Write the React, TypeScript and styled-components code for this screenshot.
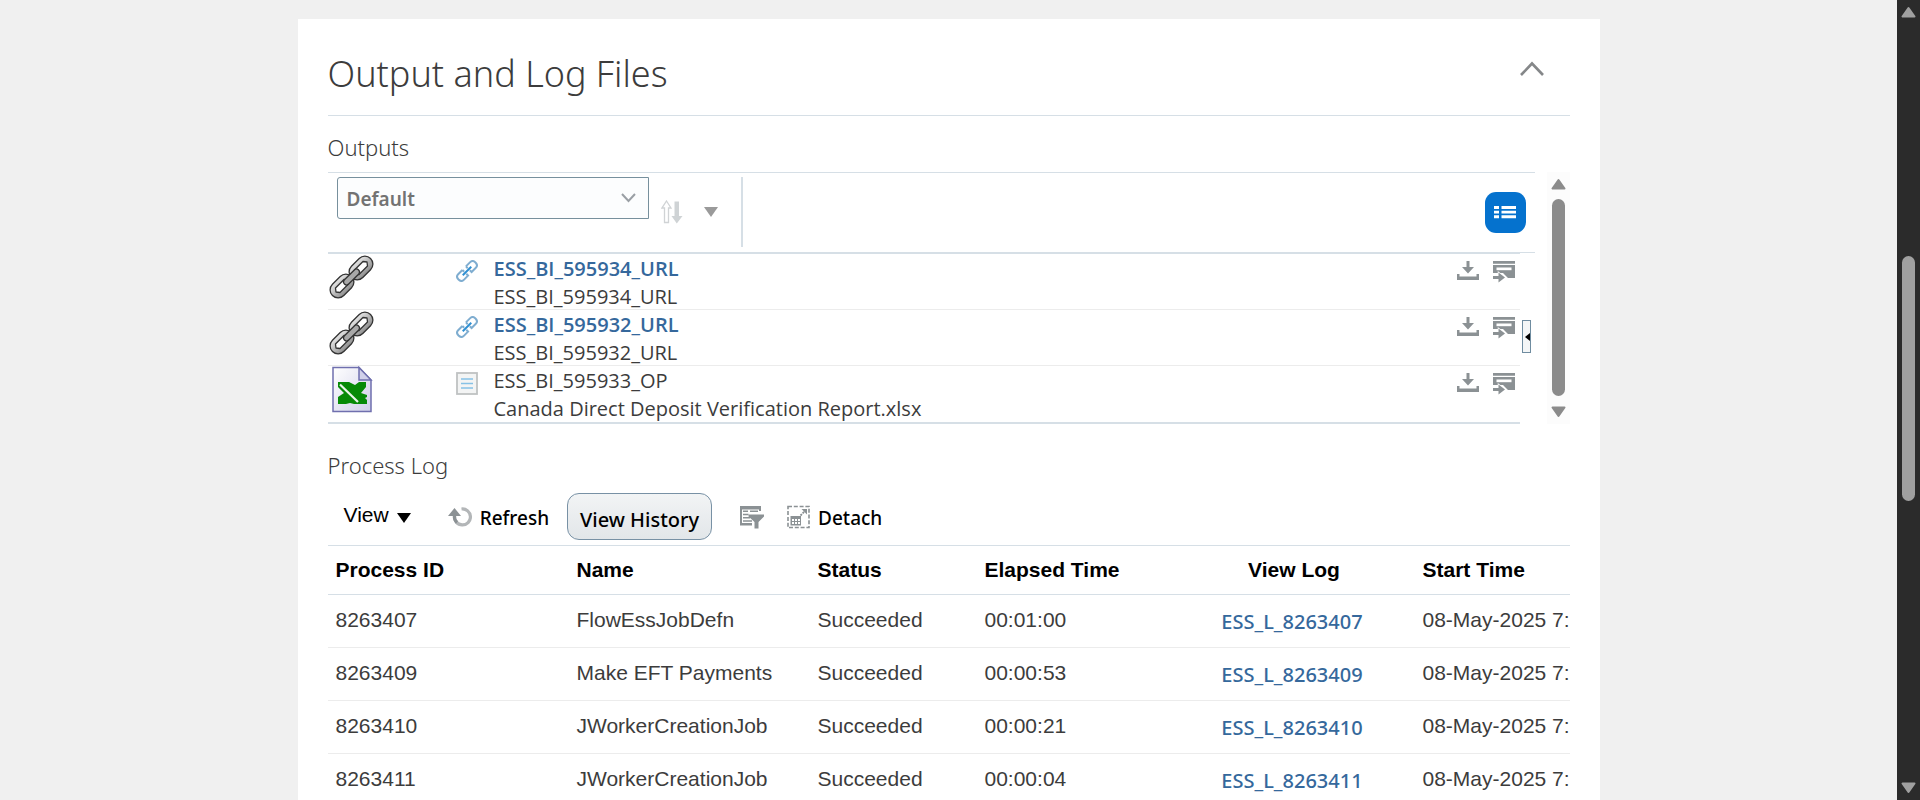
import React from "react";
import styled, { createGlobalStyle } from "styled-components";

const ui = `"Open Sans", "Noto Sans", sans-serif`;
const uiMedium = `"Noto Sans", "Open Sans", sans-serif`;
const arial = `"Liberation Sans", Arial, sans-serif`;

const GlobalStyle = createGlobalStyle`
  *, *::before, *::after { box-sizing: border-box; }
  body { margin: 0; background: #f0f0f0; color: #3c3c3c; font-family: ${ui}; }
  svg { display: block; flex: none; }
  button { margin: 0; padding: 0; border: 0; background: none; color: inherit; cursor: pointer; }
`;

const Page = styled.div`
  display: flex;
  height: 100vh;
`;

const Main = styled.main`
  flex: 1;
  min-width: 0;
  overflow: hidden;
  padding: 19px 16px 0;
`;

const Panel = styled.section`
  max-width: 1302px;
  min-height: 100%;
  margin: 0 auto;
  padding: 30px 30px 0;
  background: #fff;
`;

const PanelHeader = styled.header`
  display: flex;
  align-items: flex-start;
  justify-content: space-between;
  padding-bottom: 16px;
  border-bottom: 1px solid #d6dfe6;
`;

const Title = styled.h1`
  margin: 0;
  font: 300 36px/50px ${uiMedium};
`;

const CollapseButton = styled.button`
  display: grid;
  place-items: center;
  width: 44px;
  height: 40px;
  margin-right: 16px;
`;

const Subtitle = styled.h2<{ $top: number; $bottom: number }>`
  margin: ${(p) => p.$top}px 0 ${(p) => p.$bottom}px;
  font: 300 22px/32px ${uiMedium};
`;

const Outputs = styled.div`
  display: flex;
  gap: 12px;
`;

const OutputsBody = styled.div`
  flex: 1;
  min-width: 0;
`;

const OutputsToolbar = styled.div`
  display: flex;
  align-items: center;
  padding: 4px 9px 5px;
  border: solid #d6dfe6;
  border-width: 1px 0;
`;

const SelectBox = styled.label`
  display: flex;
  align-items: center;
  align-self: flex-start;
  position: relative;
  width: 312px;
  margin-right: 12px;

  svg {
    position: absolute;
    right: 13px;
    pointer-events: none;
  }
`;

const Select = styled.select`
  appearance: none;
  width: 100%;
  height: 42px;
  padding: 2px 40px 0 9px;
  border: 1px solid #77909d;
  border-radius: 3px 0 0 3px;
  background: #fcfdfe;
  color: #737373;
  font: 600 19px/28px ${uiMedium};
`;

const SortButton = styled.button`
  margin-right: 21px;
`;

const Separator = styled.div`
  width: 2px;
  height: 70px;
  margin-left: 23px;
  background: #d6dfe6;
`;

const ListViewButton = styled.button`
  display: grid;
  place-items: center;
  width: 41px;
  height: 41px;
  margin-left: auto;
  border-radius: 11px;
  background: #0572ce;
`;

const ListArea = styled.div`
  display: flex;
  align-items: center;
`;

const FileList = styled.ul`
  flex: 1;
  min-width: 0;
  margin: 0;
  padding: 0;
  list-style: none;
  border: solid #d6dfe6;
  border-width: 1px 0 2px;
`;

const FileRow = styled.li`
  display: grid;
  grid-template-columns: 128px 38px 1fr auto;
  align-items: start;
  height: 56px;
  padding-right: 5px;

  & + & { box-shadow: 0 -1px #ececec; }
`;

const TypeIcon = styled.div`
  padding-top: 6px;
`;

const FileText = styled.div`
  padding-top: 1px;
  font: 400 20px/28px ${ui};
  white-space: nowrap;
`;

const FileLink = styled.a`
  display: block;
  color: #35689c;
  font-weight: 600;
  text-decoration: none;
`;

const FileActions = styled.div`
  display: flex;
  align-items: flex-start;
  gap: 14px;
  padding-top: 7px;
`;

const Rail = styled.div`
  width: 15px;
  padding: 0 0 4px 2px;
`;

const Splitter = styled.button`
  display: flex;
  align-items: center;
  justify-content: flex-end;
  width: 9px;
  height: 33px;
  border: 1px solid #6f8ca0;
  background: #f4f6f7;
`;

const ScrollTrack = styled.div<{ $dark?: boolean }>`
  display: flex;
  flex: none;
  flex-direction: column;
  align-items: center;
  width: 23px;
  padding: 6px 0;
  background: ${(p) => (p.$dark ? "#2b2b2b" : "#fcfcfc")};
  color: ${(p) => (p.$dark ? "#a0a0a0" : "#8b8b8b")};
`;

const ScrollSpace = styled.div<{ $grow: number }>`
  flex: ${(p) => p.$grow} 1 0;
`;

const ScrollThumb = styled.div<{ $grow: number }>`
  flex: ${(p) => p.$grow} 1 0;
  width: 13px;
  border-radius: 7px;
  background: currentColor;
`;

const LogToolbar = styled.div`
  display: flex;
  align-items: center;
  padding: 0 0 5px 16px;
  color: #000;
`;

const MenuButton = styled.button`
  display: flex;
  align-items: center;
  gap: 8px;
  margin-right: 37px;
  padding-bottom: 4px;
  font: 400 21px/28px ${arial};

  svg { margin-top: 6px; }
`;

const ToolButton = styled.button`
  display: flex;
  align-items: center;
  gap: 8px;
  font: 500 19px/28px ${uiMedium};
`;

const ToolLabel = styled.span`
  padding-top: 3px;
`;

const HistoryButton = styled.button`
  width: 145px;
  height: 47px;
  margin: 0 28px 0 18px;
  padding-top: 7px;
  border: 1px solid #7891a5;
  border-radius: 12px;
  background: linear-gradient(#f2f4f5, #e2e6e9);
  font: 500 20px/28px ${uiMedium};
`;

const FilterButton = styled.button`
  margin-right: 23px;
`;

const TableClip = styled.div`
  overflow: hidden;
`;

const Table = styled.table`
  width: 100%;
  table-layout: fixed;
  border-collapse: separate;
  border-spacing: 0;
  border-top: 1px solid #d6dfe6;
  font: 400 21px/28px ${arial};
`;

const Col = styled.col<{ $width?: number }>`
  width: ${(p) => (p.$width ? `${p.$width}px` : "auto")};
`;

const HeadCell = styled.th<{ $center?: boolean }>`
  height: 49px;
  padding: 0 8px 1px;
  border-bottom: 1px solid #d6dfe6;
  color: #000;
  text-align: ${(p) => (p.$center ? "center" : "left")};
  white-space: nowrap;
`;

const Cell = styled.td<{ $center?: boolean }>`
  height: 53px;
  padding: 0 ${(p) => (p.$center ? 12 : 0)}px 2px 8px;
  border-bottom: 1px solid #ececec;
  text-align: ${(p) => (p.$center ? "center" : "left")};
  white-space: nowrap;
`;

const LogLink = styled.a`
  display: block;
  padding-top: 3px;
  color: #35689c;
  font: 500 20px/28px ${uiMedium};
  text-decoration: none;
`;

const Triangle = ({ color }: { color: string }) => (
  <svg width="14" height="10" viewBox="0 0 14 10">
    <path d="M0 0h14L7 10z" fill={color} />
  </svg>
);

const ScrollArrow = ({ down }: { down?: boolean }) => (
  <svg width="15" height="12" viewBox="0 0 15 12">
    <path
      d={down ? "M1.5 1.5h12L7.5 10z" : "M1.5 10.5h12L7.5 2z"}
      fill="currentColor"
      stroke="currentColor"
      strokeWidth="2"
      strokeLinejoin="round"
    />
  </svg>
);

const ChainIcon = () => (
  <svg width="47" height="46" viewBox="0 0 47 46">
    <defs>
      <linearGradient id="steel" x1="0" y1="0" x2="0" y2="1">
        <stop offset="0" stopColor="#e6e6e6" />
        <stop offset="1" stopColor="#8f8f8f" />
      </linearGradient>
    </defs>
    <g strokeLinejoin="round" stroke="#333" strokeWidth="1.3">
      {["translate(33 14) rotate(-45)", "translate(14 32) rotate(-45)"].map((t) => (
        <g key={t} transform={t}>
          <rect x="-13.5" y="-8" width="27" height="16" rx="8" fill="url(#steel)" />
          <path d="M-8.5 0l2.5-3.2H6l2.500 3.200-2.500 3.200H-6z" fill="#fff" />
        </g>
      ))}
      <rect x="-10" y="-3" width="20" height="6" rx="3" transform="translate(23.500 23) rotate(-45)" fill="#a9a9a9" />
    </g>
  </svg>
);

const ExcelIcon = () => (
  <svg width="47" height="48" viewBox="0 0 47 48">
    <defs>
      <linearGradient id="sheet" x1="0" y1="0" x2="1" y2="1">
        <stop offset="0" stopColor="#fff" />
        <stop offset="1" stopColor="#cfcfe8" />
      </linearGradient>
    </defs>
    <path d="M5 1.5h26L43 14v31.500H5z" fill="url(#sheet)" stroke="#6f6fae" strokeWidth="1.500" />
    <path d="M31 1.500V14h12z" fill="#d0d0ea" stroke="#6f6fae" strokeWidth="1.500" />
    <path d="M10 16h11l6 3 4-3h7v5l-5 6 6 2v2l-2 1 2 2v4H26l-4-1-4 1h-8v-7l6-4-6-6z" fill="#068a06" />
    <path d="M12 18.500l18 17.500" stroke="#e9f6e9" strokeWidth="2.200" />
  </svg>
);

const LinkIcon = () => (
  <svg width="22" height="22" viewBox="0 0 22 22" fill="none" strokeWidth="2">
    <g transform="rotate(-45 11 11)" stroke="#7fadd0">
      <path d="M8.500 7H2.500Q-1 7-1 11t3.500 4h6v-2.500M8.500 7v2.500" />
      <path d="M13.500 7h6Q23 7 23 11t-3.500 4h-6v-2.500M13.500 7v2.500" />
      <path d="M5 11h12" stroke="#2d8fd3" />
    </g>
  </svg>
);

const DocIcon = () => (
  <svg width="22" height="23" viewBox="0 0 22 23">
    <rect x="1" y="1" width="20" height="21" fill="#f3f4f4" stroke="#bfc2c3" strokeWidth="1.800" />
    <path d="M5 7h12M5 11.500h12M5 16h12" stroke="#86c1e6" strokeWidth="1.500" />
  </svg>
);

const DownloadIcon = () => (
  <svg width="22" height="19" viewBox="0 0 22 19" fill="#8b9194">
    <path d="M0 13h2.500v2.500h17V13H22v6H0z" />
    <path d="M9.500 0h3v6H17l-6 6.500L5 6h4.500z" />
  </svg>
);

const RepublishIcon = () => (
  <svg width="22" height="22" viewBox="0 0 22 22" fill="#8b9194">
    <path d="M0 0h22v2.800H0zM0 4h22v13h-7l-5-5H0z" />
    <path d="M3.500 6.500h15v2.700h-15z" fill="#fff" />
    <path d="M0 15h5.500v-3.500l6.500 5-6.500 5V18H0z" stroke="#fff" strokeWidth="1.500" paintOrder="stroke" />
  </svg>
);

const SortIcon = () => (
  <svg width="22" height="24" viewBox="0 0 22 24">
    <path d="M5.500 1l4.500 7H7.500v14.500h-4V8H1z" fill="#fff" stroke="#d0d3d5" strokeWidth="1.300" />
    <path d="M13.500 1.500h4.500V16h3.500l-5.700 7.500L10.500 16h3z" fill="#cfd3d5" />
  </svg>
);

const ListIcon = () => (
  <svg width="22" height="14" viewBox="0 0 22 14" fill="#fff">
    <path d="M0 1h5v3H0zM7.500 1H22v3H7.500zM0 5.700h5v2.800H0zM7.500 5.700H22v2.800H7.500zM0 10.200h5v3H0zM7.500 10.200H22v3H7.500z" />
  </svg>
);

const RefreshIcon = () => (
  <svg width="24" height="22" viewBox="0 0 24 22">
    <path d="M13.500 3A8 8 0 1 1 6.500 10" fill="none" stroke="#b3b6b8" strokeWidth="3.200" />
    <path d="M6.500 9.500A8 8 0 0 0 9 16.500" fill="none" stroke="#8b9194" strokeWidth="3.200" />
    <path d="M0 10L6.500 2 13 10z" fill="#8b9194" />
  </svg>
);

const FilterIcon = () => (
  <svg width="24" height="24" viewBox="0 0 24 24" fill="#8b9194">
    <path d="M0 1h21v5h-2V4.500H2V18h10v2.500H0z" />
    <path d="M3 6.200h5M10 6.200h8M3 9.500h5.500M3 12.800h7M3 16h9" stroke="#8b9194" strokeWidth="1.500" />
    <path d="M8.500 9.500H24v2l-5.500 5.500v6.500h-4V17l-6-5.500z" />
  </svg>
);

const DetachIcon = () => (
  <svg width="23" height="24" viewBox="0 0 23 24">
    <rect x="1" y="1.500" width="21" height="21" fill="none" stroke="#8b9194" strokeWidth="1.600" strokeDasharray="4 1.800" />
    <path d="M3.500 11H14v9.500H3.500z" fill="#8b9194" />
    <path d="M5 14h2v2H5zM8 14h2v2H8zM11 14h2v2h-2zM5 17h2v2H5zM8 17h2v2H8zM11 17h2v2h-2z" fill="#fff" />
    <path d="M13.500 10.500l4-4" stroke="#8b9194" strokeWidth="1.800" strokeDasharray="2 1" />
    <path d="M14.500 4H20v5.500z" fill="#8b9194" />
  </svg>
);

type OutputFile = { name: string; detail: string; link: boolean };

const files: OutputFile[] = [
  { name: "ESS_BI_595934_URL", detail: "ESS_BI_595934_URL", link: true },
  { name: "ESS_BI_595932_URL", detail: "ESS_BI_595932_URL", link: true },
  { name: "ESS_BI_595933_OP", detail: "Canada Direct Deposit Verification Report.xlsx", link: false },
];

const processes = [
  { id: "8263407", name: "FlowEssJobDefn", elapsed: "00:01:00" },
  { id: "8263409", name: "Make EFT Payments", elapsed: "00:00:53" },
  { id: "8263410", name: "JWorkerCreationJob", elapsed: "00:00:21" },
  { id: "8263411", name: "JWorkerCreationJob", elapsed: "00:00:04" },
];

export default function App() {
  return (
    <Page>
      <GlobalStyle />
      <Main>
        <Panel>
          <PanelHeader>
            <Title>Output and Log Files</Title>
            <CollapseButton aria-label="Collapse">
              <svg width="24" height="16" viewBox="0 0 24 16" fill="none" stroke="#858789" strokeWidth="2.600">
                <path d="M1 14L12 2.500 23 14" />
              </svg>
            </CollapseButton>
          </PanelHeader>

          <Subtitle $top={15} $bottom={9}>Outputs</Subtitle>
          <Outputs>
            <OutputsBody>
              <OutputsToolbar>
                <SelectBox>
                  <Select aria-label="Sort by" defaultValue="Default">
                    <option>Default</option>
                  </Select>
                  <svg width="15" height="10" viewBox="0 0 15 10" fill="none" stroke="#9a9fa5" strokeWidth="2">
                    <path d="M1 1l6.500 7L14 1" />
                  </svg>
                </SelectBox>
                <SortButton aria-label="Sort order"><SortIcon /></SortButton>
                <button aria-label="Sort options"><Triangle color="#9a9a9a" /></button>
                <Separator />
                <ListViewButton aria-label="List view"><ListIcon /></ListViewButton>
              </OutputsToolbar>
              <ListArea>
                <FileList>
                  {files.map((f) => (
                    <FileRow key={f.name}>
                      {f.link ? <ChainIcon /> : <ExcelIcon />}
                      <TypeIcon>{f.link ? <LinkIcon /> : <DocIcon />}</TypeIcon>
                      <FileText>
                        {f.link ? <FileLink href="#">{f.name}</FileLink> : <div>{f.name}</div>}
                        <div>{f.detail}</div>
                      </FileText>
                      <FileActions>
                        <button aria-label="Download"><DownloadIcon /></button>
                        <button aria-label="Republish"><RepublishIcon /></button>
                      </FileActions>
                    </FileRow>
                  ))}
                </FileList>
                <Rail>
                  <Splitter aria-label="Expand pane">
                    <svg width="5" height="8" viewBox="0 0 5 8"><path d="M5 0v8L0 4z" /></svg>
                  </Splitter>
                </Rail>
              </ListArea>
            </OutputsBody>
            <ScrollTrack>
              <ScrollArrow />
              <ScrollSpace $grow={9} />
              <ScrollThumb $grow={197} />
              <ScrollSpace $grow={10} />
              <ScrollArrow down />
            </ScrollTrack>
          </Outputs>

          <Subtitle $top={25} $bottom={12}>Process Log</Subtitle>
          <LogToolbar>
            <MenuButton>View <Triangle color="#000" /></MenuButton>
            <ToolButton><RefreshIcon /><ToolLabel>Refresh</ToolLabel></ToolButton>
            <HistoryButton>View History</HistoryButton>
            <FilterButton aria-label="Query by example"><FilterIcon /></FilterButton>
            <ToolButton><DetachIcon /><ToolLabel>Detach</ToolLabel></ToolButton>
          </LogToolbar>
          <TableClip>
            <Table>
              <colgroup>
                <Col $width={241} />
                <Col $width={241} />
                <Col $width={167} />
                <Col $width={197} />
                <Col $width={241} />
                <Col />
              </colgroup>
              <thead>
                <tr>
                  <HeadCell>Process ID</HeadCell>
                  <HeadCell>Name</HeadCell>
                  <HeadCell>Status</HeadCell>
                  <HeadCell>Elapsed Time</HeadCell>
                  <HeadCell $center>View Log</HeadCell>
                  <HeadCell>Start Time</HeadCell>
                </tr>
              </thead>
              <tbody>
                {processes.map((p) => (
                  <tr key={p.id}>
                    <Cell>{p.id}</Cell>
                    <Cell>{p.name}</Cell>
                    <Cell>Succeeded</Cell>
                    <Cell>{p.elapsed}</Cell>
                    <Cell $center><LogLink href="#">ESS_L_{p.id}</LogLink></Cell>
                    <Cell>08-May-2025 7:</Cell>
                  </tr>
                ))}
              </tbody>
            </Table>
          </TableClip>
        </Panel>
      </Main>
      <ScrollTrack $dark>
        <ScrollArrow />
        <ScrollSpace $grow={238} />
        <ScrollThumb $grow={245} />
        <ScrollSpace $grow={281} />
        <ScrollArrow down />
      </ScrollTrack>
    </Page>
  );
}
